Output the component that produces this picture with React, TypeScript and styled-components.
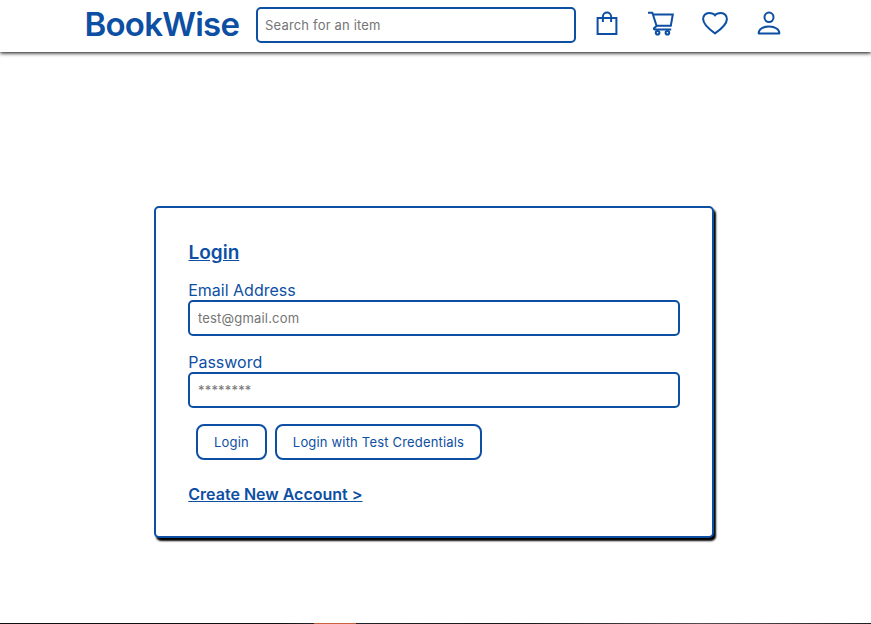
import React from "react";
import styled, { createGlobalStyle } from "styled-components";

const blue = "#0d4fa3";

const GlobalStyle = createGlobalStyle`
  * { box-sizing: border-box; }
  body { margin: 0; background: #fff; color: ${blue}; font-family: Inter, sans-serif; overflow: hidden; }
  input, button { font-family: inherit; }
`;

const Page = styled.div`
  height: 624px;
  display: flex;
  flex-direction: column;
`;

const Header = styled.header`
  height: 52px;
  flex: none;
  display: flex;
  align-items: flex-start;
  padding-left: 84px;
  background: #fff;
  box-shadow: 0 1px 4px #000;
`;

const Brand = styled.h1`
  margin: 4px 0 0;
  width: 172px;
  font-size: 33px;
  line-height: 40px;
  font-weight: 600;
  letter-spacing: -0.75px;
  padding-left: 0.5px;
  white-space: nowrap;
`;

const Field = styled.input`
  display: block;
  width: 100%;
  height: 36px;
  padding: 0 8px;
  border: 2px solid ${blue};
  border-radius: 5px;
  background: #fff;
  font-size: 13px;
  letter-spacing: 0.18px;
  outline: none;
  &::placeholder { color: #757575; opacity: 1; }
`;

const SearchField = styled(Field)`
  width: 320px;
  margin-top: 7px;
  padding: 0 7px;
`;

const IconNav = styled.nav`
  display: flex;
  gap: 22px;
  margin: 7px 0 0 15px;
`;

const IconLink = styled.a`
  width: 32px;
  height: 32px;
  svg { display: block; fill: none; stroke: ${blue}; stroke-width: 2; }
`;

const Main = styled.main`
  flex: 1;
  padding: 154px 0 0 154px;
`;

const Card = styled.form`
  width: 560px;
  height: 332px;
  padding: 32px;
  border: 2px solid ${blue};
  border-radius: 5px;
  background: #fff;
  box-shadow: 2px 3px 2px #000;
`;

const CardTitle = styled.h2`
  margin: 0 0 15px;
  padding: 1px 0 0 0.5px;
  font-size: 19px;
  line-height: 24px;
  font-weight: 600;
  text-decoration: underline;
`;

const FieldGroup = styled.label`
  display: block;
  margin-bottom: 16px;
`;

const LabelText = styled.span`
  display: block;
  padding-left: 0.2px;
  font-size: 16px;
  line-height: 20px;
`;

const Actions = styled.div`
  display: flex;
  gap: 8px;
  padding-left: 8px;
`;

const Button = styled.button<{ $width: number }>`
  width: ${(p) => p.$width}px;
  height: 36px;
  padding: 0;
  border: 2px solid ${blue};
  border-radius: 8px;
  background: #fff;
  color: ${blue};
  font-size: 13px;
  letter-spacing: 0.18px;
  white-space: nowrap;
`;

const AccountLink = styled.a`
  display: inline-block;
  margin: 24px 0 0 0.3px;
  font-size: 16px;
  line-height: 20px;
  font-weight: 600;
  text-decoration: underline;
`;

const BottomEdge = styled.div`
  height: 1px;
  flex: none;
  background: linear-gradient(90deg, #100e12 0 277px, #252328 314px, #c9603f 314px 356px, #242226 356px, #191719 510px, #554b50 700px, #4b4146 760px, #211e22 871px);
`;

const BagIcon = () => (
  <svg width="32" height="32" viewBox="0 0 32 32">
    <path d="M6.6 11.1H25.4V27H6.6Z" />
    <path d="M11.9 15V9.5a4.1 4.1 0 0 1 8.2 0V15" />
  </svg>
);

const CartIcon = () => (
  <svg width="32" height="32" viewBox="0 0 32 32">
    <path d="M3 5.7H7.4L11.6 19 9 21.2Q8.7 22.5 9.8 22.5H26.2" strokeLinejoin="round" />
    <path d="M8.5 7.5H27.8L25.8 18.8H11.5" />
    <circle cx="12.6" cy="25.7" r="1.8" />
    <circle cx="22.4" cy="25.7" r="1.8" />
  </svg>
);

const HeartIcon = () => (
  <svg width="32" height="32" viewBox="0 0 32 32">
    <path d="M16 26.3C11 22.9 4.2 18 4.1 12.1 4 8.8 6.6 6 10 6c2.5 0 4.9 .7 6 2.3C17.1 6.7 19.5 6 22 6c3.4 0 6 2.8 5.9 6.1C27.8 18 21 22.9 16 26.3Z" />
  </svg>
);

const PersonIcon = () => (
  <svg width="32" height="32" viewBox="0 0 32 32">
    <ellipse cx="16" cy="10.3" rx="4.5" ry="4.8" />
    <path d="M5.7 26.5C5.4 22.3 9.8 19.6 16 19.6S26.6 22.3 26.3 26.5Z" strokeLinejoin="round" />
  </svg>
);

export default function App() {
  return (
    <>
      <GlobalStyle />
      <Page>
        <Header>
          <Brand>BookWise</Brand>
          <SearchField placeholder="Search for an item" />
          <IconNav>
            <IconLink><BagIcon /></IconLink>
            <IconLink><CartIcon /></IconLink>
            <IconLink><HeartIcon /></IconLink>
            <IconLink><PersonIcon /></IconLink>
          </IconNav>
        </Header>
        <Main>
          <Card>
            <CardTitle>Login</CardTitle>
            <FieldGroup>
              <LabelText>Email Address</LabelText>
              <Field type="email" placeholder="test@gmail.com" />
            </FieldGroup>
            <FieldGroup>
              <LabelText>Password</LabelText>
              <Field type="password" placeholder="********" />
            </FieldGroup>
            <Actions>
              <Button type="button" $width={71}>Login</Button>
              <Button type="button" $width={207}>Login with Test Credentials</Button>
            </Actions>
            <AccountLink>Create New Account &gt;</AccountLink>
          </Card>
        </Main>
        <BottomEdge />
      </Page>
    </>
  );
}
